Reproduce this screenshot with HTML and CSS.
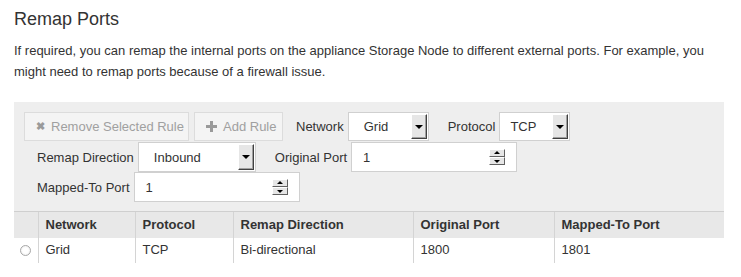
FILE: index.html
```html
<!DOCTYPE html>
<html>
<head>
<meta charset="utf-8">
<link rel="stylesheet" href="styles.css">
</head>
<body>
<div class="page">
  <h1 class="title">Remap Ports</h1>
  <p class="intro">If required, you can remap the internal ports on the appliance Storage Node to different external ports. For example, you might need to remap ports because of a firewall issue.</p>

  <div class="panel">
    <div class="row row1">
      <button class="btn btn-remove"><span class="ico-x">&#10006;</span>Remove Selected Rule</button>
      <button class="btn btn-add"><span class="ico-plus"></span>Add Rule</button>
      <span class="label lbl-network">Network</span>
      <div class="select sel-grid"><span class="val">Grid</span><span class="arrow"></span></div>
      <span class="label lbl-protocol">Protocol</span>
      <div class="select sel-tcp"><span class="val val-tcp">TCP</span><span class="arrow"></span></div>
    </div>
    <div class="row row2">
      <span class="label lbl-direction">Remap Direction</span>
      <div class="select sel-dir"><span class="val">Inbound</span><span class="arrow"></span></div>
      <span class="label lbl-orig">Original Port</span>
      <div class="num"><span class="val val-num">1</span><span class="spin"><span class="up"></span><span class="down"></span></span></div>
    </div>
    <div class="row row3">
      <span class="label lbl-mapped">Mapped-To Port</span>
      <div class="num"><span class="val val-num">1</span><span class="spin"><span class="up"></span><span class="down"></span></span></div>
    </div>
  </div>

  <table class="grid">
    <thead>
      <tr>
        <th class="c0"></th>
        <th class="c1">Network</th>
        <th class="c2">Protocol</th>
        <th class="c3">Remap Direction</th>
        <th class="c4">Original Port</th>
        <th class="c5">Mapped-To Port</th>
      </tr>
    </thead>
    <tbody>
      <tr>
        <td class="c0"><span class="radio"></span></td>
        <td>Grid</td>
        <td>TCP</td>
        <td>Bi-directional</td>
        <td>1800</td>
        <td>1801</td>
      </tr>
    </tbody>
  </table>
</div>
</body>
</html>
```

FILE: styles.css
```css
* { box-sizing: border-box; }
html, body { margin: 0; padding: 0; background: #fff; }
body {
  font-family: "Liberation Sans", Arial, sans-serif;
  font-size: 13px;
  color: #333;
}
.page { padding: 8px 17px 0 14px; }
.title {
  margin: 0;
  font-size: 18px;
  font-weight: normal;
  line-height: 22px;
  color: #333;
}
.intro {
  margin: 10px 0 0 0;
  line-height: 21px;
  font-size: 13px;
  color: #333;
}
.panel {
  margin-top: 20px;
  background: #eeeeee;
  padding: 10px 0 9px 10px;
}
.row { display: flex; align-items: center; }
.row1 { height: 29px; margin-bottom: 1px; }
.row2 { height: 30px; }
.row3 { height: 30px; }
.btn {
  height: 29px;
  border: 1px solid #dcdcdc;
  background: #f4f4f4;
  color: #a0a0a0;
  font-family: "Liberation Sans", Arial, sans-serif;
  font-size: 13px;
  padding: 0 0 0 11px;
  display: flex;
  align-items: center;
  white-space: nowrap;
  margin: 0;
}
.btn-remove { width: 165px; }
.btn-add { width: 89px; margin-left: 5px; padding-left: 11px; }
.ico-x { font-size: 11px; color: #9a9a9a; margin-right: 6px; font-weight: bold; }
.ico-plus {
  width: 11px; height: 11px; margin-right: 6px;
  background:
    linear-gradient(#9a9a9a, #9a9a9a) center / 11px 3px no-repeat,
    linear-gradient(#9a9a9a, #9a9a9a) center / 3px 11px no-repeat;
}
.label { color: #333; white-space: nowrap; }
.lbl-network { margin-left: 13px; margin-right: 4px; }
.lbl-protocol { margin-left: 19px; margin-right: 4px; }
.lbl-direction { margin-left: 13px; margin-right: 4px; }
.lbl-orig { margin-left: 19px; margin-right: 4px; }
.lbl-mapped { margin-left: 13px; margin-right: 4px; }
.select {
  position: relative;
  height: 29px;
  background: #fff;
  border: 1px solid #d0d0d0;
  display: flex;
  align-items: center;
}
.row2 .select { height: 30px; }
.sel-grid { width: 81px; }
.sel-tcp { width: 71px; }
.sel-dir { width: 118px; }
.val { padding-left: 15px; color: #333; }
.val-tcp { padding-left: 10px; }
.val-num { padding-left: 11px; }
.arrow {
  position: absolute;
  right: 1px; top: 1px; bottom: 1px;
  width: 16px;
  background: #e6e6e6;
  border-top: 1px solid #fff;
  border-left: 1px solid #fff;
  border-right: 1px solid #404040;
  border-bottom: 1px solid #404040;
  box-shadow: inset -1px -1px 0 #a0a0a0;
}
.arrow::after {
  content: "";
  position: absolute;
  left: 3px; top: 50%;
  margin-top: -2px;
  border-left: 4px solid transparent;
  border-right: 4px solid transparent;
  border-top: 4px solid #000;
}
.num {
  position: relative;
  width: 166px;
  height: 30px;
  background: #fff;
  border: 1px solid #d0d0d0;
  display: flex;
  align-items: center;
}
.spin {
  position: absolute;
  right: 11px; top: 6px;
  width: 16px; height: 16px;
  display: flex; flex-direction: column;
}
.spin .up, .spin .down {
  position: relative;
  flex: 1;
  background: #e6e6e6;
  border-top: 1px solid #fff;
  border-left: 1px solid #fff;
  border-right: 1px solid #606060;
  border-bottom: 1px solid #606060;
}
.spin .up::after, .spin .down::after {
  content: "";
  position: absolute;
  left: 4px; top: 2px;
  border-left: 3px solid transparent;
  border-right: 3px solid transparent;
}
.spin .up::after { border-bottom: 3px solid #000; top: 1px; }
.spin .down::after { border-top: 3px solid #000; top: 2px; }
.grid {
  width: 710px;
  border-collapse: collapse;
  table-layout: fixed;
  font-size: 13px;
}
.grid th {
  background: #e8e8e8;
  font-weight: bold;
  text-align: left;
  height: 26px;
  padding: 0 0 0 7px;
  border-top: 1px solid #cfcfcf;
  border-left: 1px solid #d4d4d4;
  color: #333;
}
.grid td {
  height: 25px;
  padding: 0 0 2px 7px;
  border-left: 1px solid #d4d4d4;
  color: #333;
}
.grid .c0 { width: 24px; border-left: none; padding: 0; }
.grid .c1 { width: 97px; }
.grid .c2 { width: 98px; }
.grid .c3 { width: 180px; }
.grid .c4 { width: 141px; }
.grid .c5 { width: 170px; }
.radio {
  display: block;
  width: 11px; height: 11px;
  margin-left: 6px;
  border-radius: 50%;
  border: 1px solid #a8a8a8;
  background: radial-gradient(circle, #fff 40%, #e8e8e8 100%);
}
```
